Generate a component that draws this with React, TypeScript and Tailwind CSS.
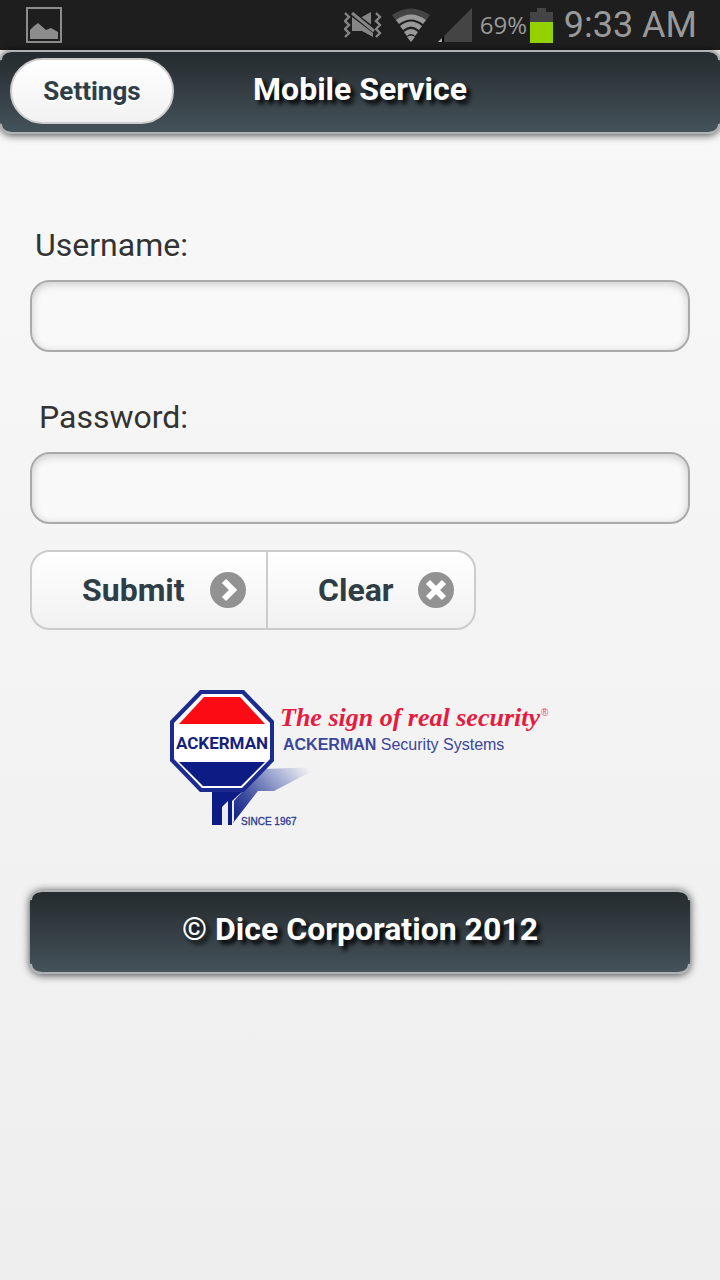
import type { ReactNode } from "react";

function PictureIcon() {
  return (
    <svg width="37" height="38" viewBox="0 0 37 38" aria-hidden="true">
      <rect x="1" y="2" width="34" height="34" fill="none" stroke="#8c8c8c" strokeWidth="2" />
      <path d="M4 33V24L8 20L12 17L20 24L25 22L32 26V33Z" fill="#8c8c8c" />
    </svg>
  );
}

function VibrateIcon() {
  return (
    <svg width="38" height="26" viewBox="0 0 38 26" aria-hidden="true">
      <g fill="none" stroke="#858585" strokeWidth="2.4">
        <path d="M1 1l4 4-4 4 4 4-4 4 4 4-4 4" />
        <path d="M32 1l4 4-4 4 4 4-4 4 4 4-4 4" />
      </g>
      <path d="M8 5L29 21V25L18 19H8Z" fill="#858585" />
      <path d="M16 6L27 0V14Z" fill="#858585" />
      <path d="M8 1L30 18" stroke="#1e1e1e" strokeWidth="5" />
      <path d="M8 1L30 19" stroke="#858585" strokeWidth="3" />
    </svg>
  );
}

function WifiIcon() {
  return (
    <svg width="38" height="34" viewBox="0 0 38 34" aria-hidden="true">
      <path d="M0 7Q19-6 38 7L33 14Q19 3 5 14Z" fill="#444" />
      <path d="M4 12Q19 1 34 12L31 16Q19 7 7 16Z" fill="#999" />
      <path d="M8 18Q19 9 30 18L27 22Q19 15 11 22Z" fill="#999" />
      <path d="M12 24Q19 18 26 24L23 28Q19 24 15 28Z" fill="#999" />
      <path d="M15 29Q19 26 23 29L19 34Z" fill="#999" />
    </svg>
  );
}

function SignalIcon() {
  return (
    <svg width="34" height="34" viewBox="0 0 34 34" aria-hidden="true">
      <path d="M34 0V34H0Z" fill="#444" />
      <path d="M4 30V34H0Z" fill="#aaa" />
      <path d="M4 30L6 28V34H4Z" fill="#000" />
    </svg>
  );
}

function BatteryIcon() {
  return (
    <svg width="23" height="35" viewBox="0 0 23 35" aria-hidden="true">
      <path d="M0 4H7V0H16V4H23V14H0Z" fill="#444" />
      <path d="M0 14H23V35H0Z" fill="#93d200" />
    </svg>
  );
}

function ArrowIcon() {
  return (
    <svg width="36" height="36" viewBox="0 0 36 36" aria-hidden="true">
      <circle cx="18" cy="18" r="18" fill="#929292" />
      <path d="M14 9L23 18L14 27" fill="none" stroke="#fff" strokeWidth="6" />
    </svg>
  );
}

function CrossIcon() {
  return (
    <svg width="36" height="36" viewBox="0 0 36 36" aria-hidden="true">
      <circle cx="18" cy="18" r="18" fill="#929292" />
      <path d="M10 10L26 26M26 10L10 26" stroke="#fff" strokeWidth="6" />
    </svg>
  );
}

function AckermanLogo() {
  return (
    <svg width="380" height="140" viewBox="0 0 380 140" role="img" aria-label="Ackerman Security Systems">
      <defs>
        <linearGradient id="shadow" gradientUnits="userSpaceOnUse" x1="62" y1="132" x2="130" y2="70">
          <stop offset="0" stopColor="#0c1c84" />
          <stop offset="0.3" stopColor="#3c4c9f" />
          <stop offset="0.65" stopColor="#98a3ce" />
          <stop offset="1" stopColor="#f1f1f3" />
        </linearGradient>
      </defs>
      <path d="M63 133V112L92 79L150 77L104 101H88Z" fill="url(#shadow)" />
      <path d="M42 99H75L62 111V135H42Z" fill="#0c1c84" />
      <path d="M52 117L58 111V135H52Z" fill="#e9ebf5" />
      <path d="M62 112L64 110V131L62 134Z" fill="#e9ebf5" />
      <path d="M30 0H74L104 31V71L74 102H30L0 71V31Z" fill="#1b2b8f" />
      <path d="M32 4H72L100 33V69L72 98H32L4 69V33Z" fill="#fff" />
      <path d="M34 7H70L95 34H9Z" fill="#fd0b14" />
      <path d="M9 72H95L71 96H33Z" fill="#0c1c84" />
      <text x="52" y="59" textAnchor="middle" fontFamily="Roboto, sans-serif" fontWeight="700" fontSize="17" fill="#14227d">ACKERMAN</text>
      <text x="110" y="36" fontFamily="'Liberation Serif', serif" fontStyle="italic" fontWeight="700" fontSize="26" fill="#e51c40">The sign of real security</text>
      <text x="371" y="26" fontFamily="'Liberation Sans', sans-serif" fontSize="10" fill="#e8506c">®</text>
      <text x="113" y="60" fontFamily="'Liberation Sans', sans-serif" fontSize="16" fill="#3b479a">
        <tspan fontWeight="700">ACKERMAN</tspan> Security Systems
      </text>
      <text x="71" y="135" fontFamily="'Liberation Sans', sans-serif" fontSize="10" fill="#2c3990" stroke="#2c3990" strokeWidth="0.3">SINCE 1967</text>
    </svg>
  );
}

function Bar({ children }: { children: ReactNode }) {
  return (
    <div className="relative flex h-[84px] items-center justify-center rounded-xl border-y-2 border-[#aeb2b4] bg-linear-to-b from-[#252b2e] to-[#44525a] shadow-[0_1px_8px_rgba(0,0,0,0.75)]">
      <span className="absolute -top-[2px] left-0 size-[10px] rounded-tl-[10px] border-t-2 border-l-2 border-[#aeb2b4]" />
      <span className="absolute -top-[2px] right-0 size-[10px] rounded-tr-[10px] border-t-2 border-r-2 border-[#aeb2b4]" />
      <span className="absolute -bottom-[2px] left-0 size-[10px] rounded-bl-[10px] border-b-2 border-l-2 border-[#aeb2b4]" />
      <span className="absolute right-0 -bottom-[2px] size-[10px] rounded-br-[10px] border-r-2 border-b-2 border-[#aeb2b4]" />
      {children}
    </div>
  );
}

function Field({ id, label, type, indent }: { id: string; label: string; type: string; indent: string }) {
  return (
    <div className="flex flex-col gap-3">
      <label htmlFor={id} className={`${indent} text-[32px] leading-[46px] text-[#333] [text-shadow:0_2px_0_#fff]`}>
        {label}
      </label>
      <input
        id={id}
        type={type}
        className="h-[72px] w-full rounded-[20px] border-2 border-[#aaa] bg-[#f9f9f9] px-4 text-[32px] text-[#333] shadow-[inset_0_2px_8px_rgba(0,0,0,0.2)] outline-none"
      />
    </div>
  );
}

export default function App() {
  return (
    <div className="flex min-h-screen flex-col bg-linear-to-b from-[#f9f9f9] to-[#eee] font-['Roboto',sans-serif]">
      <div className="flex h-[50px] items-center justify-between bg-[#1e1e1e] pr-[23px] pl-[26px] text-[#999]">
        <PictureIcon />
        <div className="flex items-center">
          <VibrateIcon />
          <span className="ml-[10px]"><WifiIcon /></span>
          <span className="ml-2"><SignalIcon /></span>
          <span className="ml-2 w-[50px] font-['Open_Sans',sans-serif] text-2xl">69%</span>
          <BatteryIcon />
          <span className="ml-[11px] text-[36px] leading-none">9:33 AM</span>
        </div>
      </div>

      <header>
        <Bar>
          <button
            type="button"
            className="absolute top-[6px] left-[10px] h-[66px] w-[164px] rounded-full border-2 border-[#ccc] bg-linear-to-b from-white to-[#f1f1f1] text-[26px] font-bold text-[#2f3e46] [text-shadow:0_2px_0_#fff]"
          >
            Settings
          </button>
          <h1 className="pb-[6px] text-[32px] leading-10 font-bold text-white [text-shadow:4px_4px_4px_#000]">Mobile Service</h1>
        </Bar>
      </header>

      <main className="flex flex-col px-[30px] pt-[88px]">
        <form className="flex flex-col" onSubmit={(e) => e.preventDefault()}>
          <div className="flex flex-col gap-[42px]">
            <Field id="username" label="Username:" type="text" indent="pl-[5px]" />
            <Field id="password" label="Password:" type="password" indent="pl-[9px]" />
          </div>
          <div className="mt-[26px] flex h-20 self-start overflow-hidden rounded-[20px] border-2 border-[#ccc] bg-linear-to-b from-white to-[#f1f1f1] text-[32px] font-bold text-[#2f3e46] [text-shadow:0_2px_0_#fff]">
            <button type="submit" className="flex w-[236px] items-center justify-between border-r-2 border-[#ccc] pr-[20px] pl-[50px]">
              Submit
              <ArrowIcon />
            </button>
            <button type="reset" className="flex w-[206px] items-center justify-between pr-[20px] pl-[50px]">
              Clear
              <CrossIcon />
            </button>
          </div>
        </form>
        <div className="mt-[60px] flex justify-center">
          <AckermanLogo />
        </div>
        <footer className="mt-[60px]">
          <Bar>
            <p className="pb-[6px] text-[32px] leading-10 font-bold text-white [text-shadow:4px_4px_4px_#000]">© Dice Corporation 2012</p>
          </Bar>
        </footer>
      </main>
    </div>
  );
}
